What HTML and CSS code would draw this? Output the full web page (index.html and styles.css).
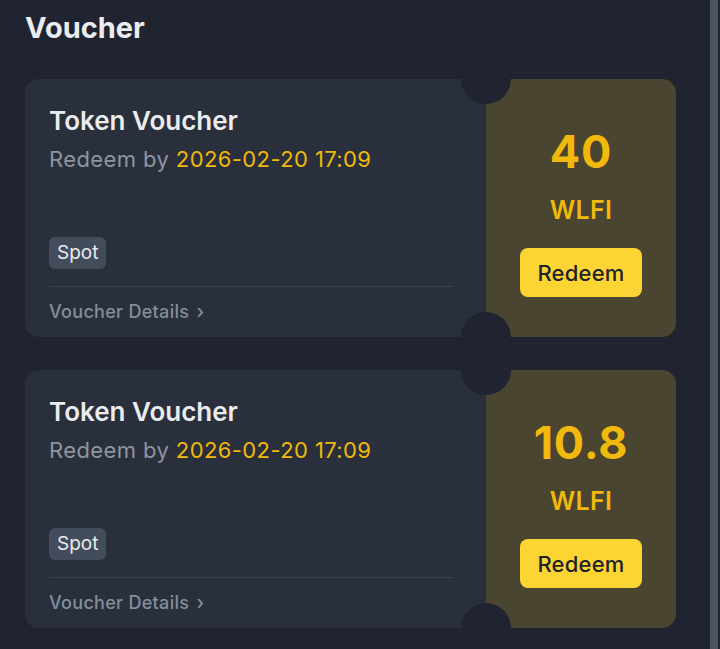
FILE: index.html
```html
<!DOCTYPE html>
<html lang="en">
<head>
<meta charset="utf-8">
<title>Voucher</title>
<link rel="stylesheet" href="styles.css">
</head>
<body>
<div class="page">
  <main class="content">
    <h1 class="title">Voucher</h1>
    <div class="list">
      <div class="card">
        <div class="info">
          <div class="name">Token Voucher</div>
          <div class="deadline">Redeem by <span class="date">2026-02-20 17:09</span></div>
          <div class="tags"><span class="tag">Spot</span></div>
          <div class="details">Voucher Details <span class="chev">›</span></div>
        </div>
        <div class="reward">
          <div class="amount">40</div>
          <div class="coin">WLFI</div>
          <button class="redeem">Redeem</button>
        </div>
      </div>
      <div class="card">
        <div class="info">
          <div class="name">Token Voucher</div>
          <div class="deadline">Redeem by <span class="date">2026-02-20 17:09</span></div>
          <div class="tags"><span class="tag">Spot</span></div>
          <div class="details">Voucher Details <span class="chev">›</span></div>
        </div>
        <div class="reward">
          <div class="amount">10.8</div>
          <div class="coin">WLFI</div>
          <button class="redeem">Redeem</button>
        </div>
      </div>
    </div>
  </main>
  <div class="scrollbar"><div class="thumb"></div></div>
</div>
</body>
</html>
```

FILE: styles.css
```css
* { box-sizing: border-box; }
html, body { margin: 0; padding: 0; }
body {
  background: #1f2430;
  font-family: "Inter", "Liberation Sans", sans-serif;
  color: #eaecef;
  width: 720px;
  height: 649px;
  overflow: hidden;
}
.page {
  display: flex;
  height: 649px;
}
.content {
  flex: 1;
  padding: 8px 34px 0 25px;
}
.title {
  margin: 0;
  font-size: 29px;
  font-weight: 700;
  line-height: 40px;
  color: #eaecef;
}
.list {
  margin-top: 31px;
  display: flex;
  flex-direction: column;
  gap: 33px;
}
.card {
  display: flex;
  height: 258px;
  border-radius: 14px;
  overflow: hidden;
  position: relative;
}
.info {
  width: 461px;
  background: #2a303b;
  padding: 26px 33px 0 24px;
  display: flex;
  flex-direction: column;
}
.name {
  font-size: 26px;
  font-weight: 600;
  line-height: 32px;
  color: #eaecef;
}
.deadline {
  margin-top: 9px;
  font-size: 22px;
  letter-spacing: 0.4px;
  line-height: 26px;
  color: #8d95a1;
}
.date { color: #f0b90b; }
.tags {
  margin-top: 65px;
  display: flex;
}
.tag {
  background: #434c5b;
  color: #eaecef;
  font-size: 19px;
  line-height: 32px;
  padding: 0 8px;
  border-radius: 6px;
}
.details {
  margin-top: 17px;
  border-top: 1px solid #3a414d;
  padding-top: 13px;
  font-size: 18px;
  letter-spacing: 0.3px;
  font-weight: 500;
  line-height: 24px;
  color: #848e9c;
}
.chev { font-size: 19px; margin-left: 2px; }
.reward {
  flex: 1;
  background: #4a4530;
  position: relative;
  display: flex;
  flex-direction: column;
  align-items: center;
  padding-top: 46px;
}
.reward::before,
.reward::after {
  content: "";
  position: absolute;
  left: -25px;
  width: 50px;
  height: 50px;
  border-radius: 50%;
  background: #1f2430;
}
.reward::before { top: -25px; }
.reward::after { bottom: -25px; }
.amount {
  font-size: 45px;
  font-weight: 700;
  letter-spacing: 0.8px;
  line-height: 54px;
  color: #f0b90b;
}
.coin {
  margin-top: 15px;
  font-size: 25px;
  font-weight: 600;
  letter-spacing: 0.3px;
  line-height: 32px;
  color: #f0b90b;
}
.redeem {
  margin-top: 22px;
  width: 122px;
  height: 49px;
  border: none;
  border-radius: 8px;
  background: #fcd535;
  color: #1e2329;
  font-family: inherit;
  font-size: 22px;
  font-weight: 500;
  letter-spacing: 0.2px;
  padding: 0;
}
.scrollbar {
  width: 10px;
  display: flex;
  padding-right: 2px;
  background: #1d222c;
}
.thumb {
  flex: 1;
  background: #4b5463;
}
```
